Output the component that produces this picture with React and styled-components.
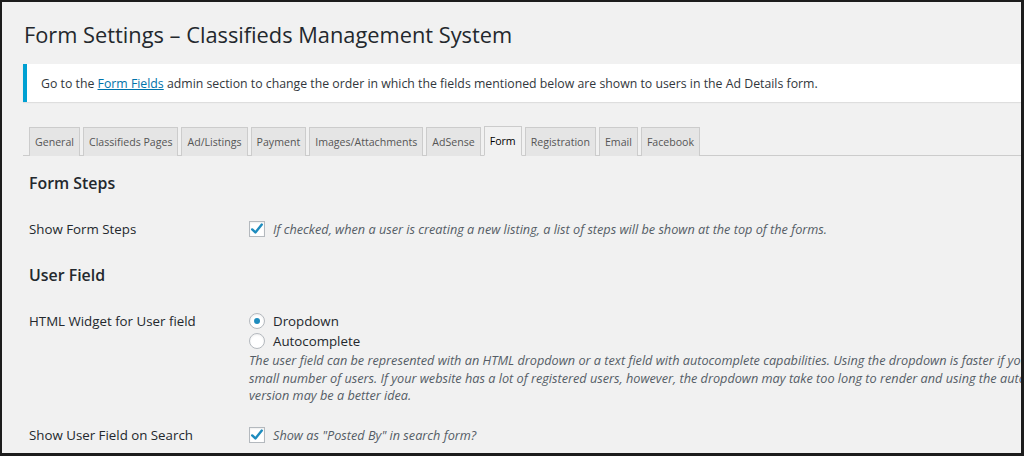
import styled, { createGlobalStyle } from 'styled-components';

const Global = createGlobalStyle`
    html, body { margin: 0; padding: 0; }
    body {
        background: #1c1c1c;
        font-family: "Open Sans", "Noto Sans", sans-serif;
        color: #23282d;
    }
`

const tabs = ['General', 'Classifieds Pages', 'Ad/Listings', 'Payment', 'Images/Attachments', 'AdSense', 'Form', 'Registration', 'Email', 'Facebook']

function CheckIcon() {
    return (
        <svg width="14" height="14" viewBox="0 0 14 14">
            <path d="M2.2 7.4 L5.4 10.4 L11.8 2.6" fill="none" stroke="#1e8cbe" strokeWidth="2.4" strokeLinecap="round" strokeLinejoin="round" />
        </svg>
    )
}

function App() {
    return (
        <>
            <Global />
            <Frame>
                <Wrap>
                    <Title>Form Settings – Classifieds Management System</Title>

                    <Notice>
                        <NoticeText>
                            Go to the <a href="#">Form Fields</a> admin section to change the order in which the fields mentioned below are shown to users in the Ad Details form.
                        </NoticeText>
                    </Notice>

                    <TabBar>
                        {tabs.map((t) => (
                            <Tab key={t} $active={t === 'Form'}>{t}</Tab>
                        ))}
                    </TabBar>

                    <Content>
                        <Heading>Form Steps</Heading>
                        <Row>
                            <Label>Show Form Steps</Label>
                            <Field>
                                <Option>
                                    <Checkbox><CheckIcon /></Checkbox>
                                    <Description>If checked, when a user is creating a new listing, a list of steps will be shown at the top of the forms.</Description>
                                </Option>
                            </Field>
                        </Row>

                        <Heading>User Field</Heading>
                        <Row>
                            <Label>HTML Widget for User field</Label>
                            <Field>
                                <Option>
                                    <Radio $checked />
                                    <span>Dropdown</span>
                                </Option>
                                <Option>
                                    <Radio />
                                    <span>Autocomplete</span>
                                </Option>
                                <Description $block>
                                    The user field can be represented with an HTML dropdown or a text field with autocomplete capabilities. Using the dropdown is faster if you have a<br />
                                    small number of users. If your website has a lot of registered users, however, the dropdown may take too long to render and using the autocomplete<br />
                                    version may be a better idea.
                                </Description>
                            </Field>
                        </Row>
                        <Row>
                            <Label>Show User Field on Search</Label>
                            <Field>
                                <Option>
                                    <Checkbox><CheckIcon /></Checkbox>
                                    <Description>Show as "Posted By" in search form?</Description>
                                </Option>
                            </Field>
                        </Row>
                    </Content>
                </Wrap>
            </Frame>
        </>
    )
}

const Frame = styled.div`
    box-sizing: border-box;
    height: 456px;
    width: 1024px;
    overflow: hidden;
    background: #f1f1f1;
    border: 2px solid #1c1c1c;
    border-right: 3px solid #1c1c1c;
    border-bottom: 3px solid #1c1c1c;
`

const Wrap = styled.div`
    margin-left: 21px;
    white-space: nowrap;
`

const Title = styled.h1`
    margin: 0;
    padding: 18px 0 0 1px;
    height: 62px;
    box-sizing: border-box;
    font-size: 21.8px;
    font-weight: 400;
    line-height: 29px;
    color: #23282d;
`

const Notice = styled.div`
    background: #fff;
    border-left: 4px solid #00a0d2;
    box-shadow: 0 1px 1px rgba(0, 0, 0, 0.08);
    height: 38px;
    box-sizing: border-box;
    padding: 0 14px;
    display: flex;
    align-items: center;
`

const NoticeText = styled.p`
    margin: 0;
    font-size: 12.3px;
    color: #32373c;

    a {
        color: #0073aa;
        text-decoration: underline;
    }
`

const TabBar = styled.nav`
    margin-top: 24px;
    display: flex;
    align-items: flex-end;
    gap: 3px;
    padding-left: 6px;
    border-bottom: 1px solid #ccc;
`

const Tab = styled.span`
    display: flex;
    align-items: center;
    height: 28px;
    margin-bottom: -1px;
    padding: 0 5px;
    border: 1px solid #ccc;
    border-bottom: ${(p) => (p.$active ? '1px solid #f1f1f1' : 'none')};
    background: ${(p) => (p.$active ? '#f1f1f1' : '#e5e5e5')};
    color: ${(p) => (p.$active ? '#000' : '#555')};
    font-size: 10.6px;
`

const Content = styled.div`
    padding-left: 6px;
`

const Heading = styled.h2`
    margin: 15px 0 13px;
    font-size: 15.9px;
    font-weight: 600;
    line-height: 24px;
    color: #23282d;
`

const Row = styled.div`
    display: flex;
    padding: 11px 0 9px;
`

const Label = styled.div`
    width: 220px;
    flex-shrink: 0;
    font-size: 13.3px;
    line-height: 20px;
    color: #23282d;
`

const Field = styled.div`
    display: flex;
    flex-direction: column;
    font-size: 13.3px;
    line-height: 20px;
`

const Option = styled.label`
    display: flex;
    align-items: center;
    gap: 8px;
    height: 20px;
`

const Checkbox = styled.span`
    box-sizing: border-box;
    width: 16px;
    height: 16px;
    border: 1px solid #b4b9be;
    background: #fff;
    box-shadow: inset 0 1px 2px rgba(0, 0, 0, 0.07);
    display: flex;
    align-items: center;
    justify-content: center;
`

const Radio = styled.span`
    box-sizing: border-box;
    width: 16px;
    height: 16px;
    border-radius: 50%;
    border: 1px solid #b4b9be;
    background: #fff;
    box-shadow: inset 0 1px 2px rgba(0, 0, 0, 0.07);
    display: flex;
    align-items: center;
    justify-content: center;

    &::after {
        content: '';
        display: ${(p) => (p.$checked ? 'block' : 'none')};
        width: 6px;
        height: 6px;
        border-radius: 50%;
        background: #1e8cbe;
    }
`

const Description = styled.span`
    font-size: 12.7px;
    font-style: italic;
    color: #555d66;
    line-height: ${(p) => (p.$block ? '17.5px' : '20px')};
    display: ${(p) => (p.$block ? 'block' : 'inline')};
    margin-top: ${(p) => (p.$block ? '1px' : '0')};
`

export default App
